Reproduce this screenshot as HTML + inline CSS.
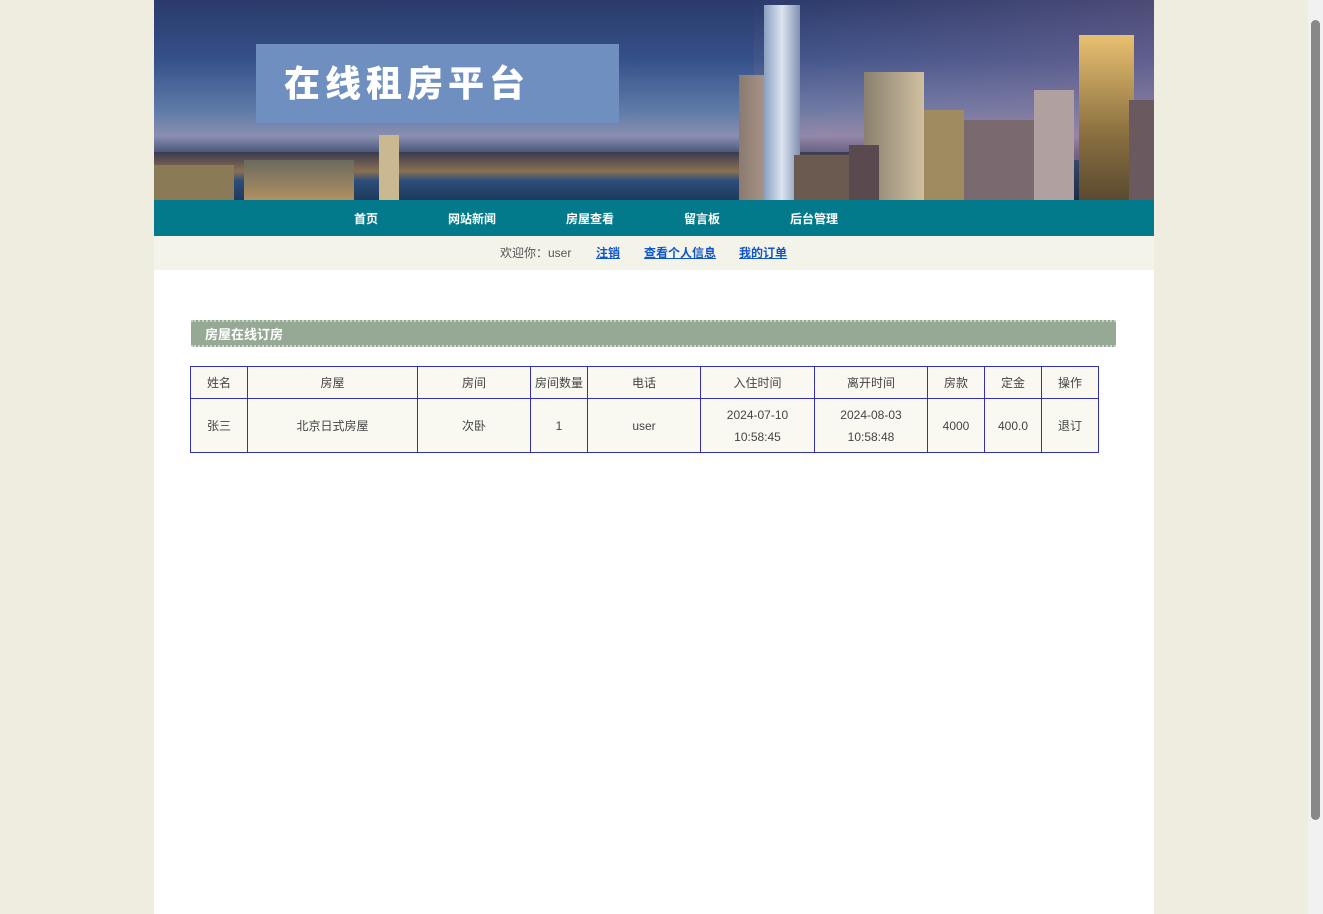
<!DOCTYPE html>
<html><head><meta charset="utf-8"><style>
*{margin:0;padding:0;box-sizing:border-box}
html,body{width:1323px;height:914px;overflow:hidden}
body{background:#efece0;font-family:"Liberation Sans","Noto Sans CJK SC","Microsoft YaHei",sans-serif;font-size:12px;color:#444;position:relative}
#wrap{position:absolute;left:154px;top:0;width:1000px;height:914px;background:#fff}
#banner{position:absolute;left:0;top:0;width:1000px;height:200px;overflow:hidden;
background:linear-gradient(180deg,#2a3a6a 0%,#35518a 30%,#5e7aa8 55%,#8a8fb0 68%,#3a4a70 78%,#1c2b48 100%)}
#banner .glow{position:absolute;left:600px;top:0;width:400px;height:160px;background:linear-gradient(160deg,rgba(140,100,150,.0),rgba(170,120,150,.55));}
.b{position:absolute;bottom:0}
#title{position:absolute;left:102px;top:44px;width:363px;height:79px;background:#6e8fc0;color:#fff;font-family:"Noto Sans CJK SC",sans-serif;font-weight:900;font-size:36px;line-height:40px;letter-spacing:5px;padding:17px 0 0 28px}
#nav{position:absolute;left:0;top:200px;width:1000px;height:36px;background:#037a8b}
#nav span{position:absolute;top:10px;color:#fff;font-weight:bold;font-size:12px}
#wel{position:absolute;left:0;top:236px;width:1000px;height:34px;background:#f3f3ea;font-size:12px}
#wel span,#wel a{position:absolute;top:8px}
#wel a{color:#1155cc;font-weight:bold;text-decoration:underline}
#hd{position:absolute;left:37px;top:320px;width:925px;height:27px;background:#96a994;border-top:2px dotted #c8d2c6;border-bottom:2px dotted #d0d8cf;color:#fff;font-weight:bold;font-size:13px;padding:2px 0 0 14px}
table{position:absolute;left:36px;top:366px;border-collapse:collapse;background:#f9f9f2}
td{border:1px solid #3030b0;text-align:center;font-size:12px;color:#444;line-height:22px;padding:0}
</style></head><body>
<div id="wrap">
<div id="banner">
<div class="glow"></div>
<div class="b" style="left:0;width:740px;height:48px;background:linear-gradient(180deg,#3a3a50,#8a7050 40%,#2c4e7a 60%,#1e3a5c)"></div>
<div class="b" style="left:225px;width:20px;height:65px;background:#c9b890"></div>
<div class="b" style="left:90px;width:110px;height:40px;background:linear-gradient(180deg,#6a6a60,#b09060)"></div>
<div class="b" style="left:0;width:80px;height:35px;background:#8a7a55"></div>
<div class="b" style="left:585px;width:55px;height:125px;background:linear-gradient(90deg,#8a7a70,#c8b0a0)"></div>
<div class="b" style="left:610px;width:36px;height:195px;background:linear-gradient(90deg,#8aa0c0,#dce4f0,#8090b0)"></div>
<div class="b" style="left:640px;width:75px;height:45px;background:#6a5a50"></div>
<div class="b" style="left:710px;width:60px;height:128px;background:linear-gradient(90deg,#8a8070,#d0c0a0)"></div>
<div class="b" style="left:695px;width:30px;height:55px;background:#5a4a50"></div>
<div class="b" style="left:770px;width:40px;height:90px;background:#a08a60"></div>
<div class="b" style="left:810px;width:70px;height:80px;background:#7a6a70"></div>
<div class="b" style="left:880px;width:40px;height:110px;background:#b0a0a0"></div>
<div class="b" style="left:925px;width:55px;height:165px;background:linear-gradient(180deg,#e8c070,#8a7040 60%,#5a4a30)"></div>
<div class="b" style="left:975px;width:25px;height:100px;background:#6a5a60"></div>
<div id="title">在线租房平台</div>
</div>
<div id="nav">
<span style="left:200px">首页</span>
<span style="left:294px">网站新闻</span>
<span style="left:412px">房屋查看</span>
<span style="left:530px">留言板</span>
<span style="left:636px">后台管理</span>
</div>
<div id="wel">
<span style="left:346px;color:#555">欢迎你：user</span>
<a style="left:442px">注销</a>
<a style="left:490px">查看个人信息</a>
<a style="left:585px">我的订单</a>
</div>
<div id="hd">房屋在线订房</div>
<table>
<tr style="height:32px"><td style="width:57px">姓名</td><td style="width:170px">房屋</td><td style="width:113px">房间</td><td style="width:57px">房间数量</td><td style="width:113px">电话</td><td style="width:114px">入住时间</td><td style="width:113px">离开时间</td><td style="width:57px">房款</td><td style="width:57px">定金</td><td style="width:57px">操作</td></tr>
<tr style="height:54px"><td>张三</td><td>北京日式房屋</td><td>次卧</td><td>1</td><td>user</td><td>2024-07-10<br>10:58:45</td><td>2024-08-03<br>10:58:48</td><td>4000</td><td>400.0</td><td>退订</td></tr>
</table>
</div>
<div style="position:absolute;left:1308px;top:0;width:15px;height:914px;background:#f1f1f1"></div>
<div style="position:absolute;left:1311px;top:20px;width:9px;height:800px;background:#888;border-radius:5px"></div>
</body></html>
